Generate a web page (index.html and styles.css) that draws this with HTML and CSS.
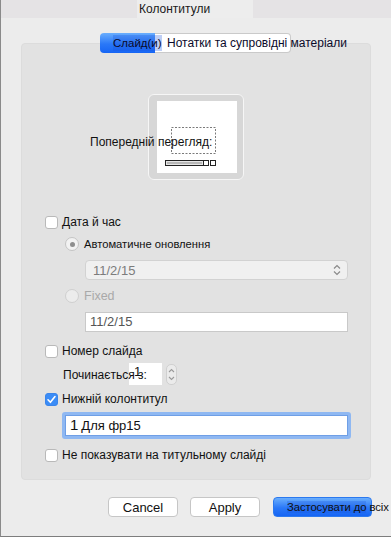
FILE: index.html
```html
<!DOCTYPE html>
<html lang="uk">
<head>
    <meta charset="UTF-8">
    <meta name="viewport" content="width=device-width, initial-scale=1.0">
    <title>Колонтитули</title>
    <link rel="stylesheet" href="styles.css">
</head>
<body>
    <div class="window">
        <header class="titlebar">
            <span class="title">Колонтитули</span>
        </header>

        <main class="content">
            <div class="tabs">
                <span class="tab active"><span class="tab-label">Слайд(и)</span></span>
                <span class="tab">Нотатки та супровідні матеріали</span>
            </div>

            <section class="group">
                <div class="preview">
                    <div class="preview-frame">
                        <svg width="80" height="72" viewBox="0 0 80 72">
                            <rect width="80" height="72" fill="#fff"/>
                            <rect x="14.5" y="26.5" width="44" height="26" fill="none" stroke="#7a7a7a" stroke-dasharray="2 1.5"/>
                            <rect x="8.5" y="59.5" width="38" height="5" fill="#e6e6e6" stroke="#222"/>
                            <line x1="10" y1="62" x2="45" y2="62" stroke="#888"/>
                            <rect x="46.5" y="59.5" width="5" height="5" fill="#fff" stroke="#222"/>
                            <rect x="53.5" y="59.5" width="5" height="5" fill="#fff" stroke="#222"/>
                        </svg>
                    </div>
                    <span class="preview-label">Попередній перегляд:</span>
                </div>

                <label class="check row-date"><span class="box"></span>Дата й час</label>

                <label class="radio row-auto"><span class="dot selected"></span>Автоматичне оновлення</label>

                <div class="select">
                    <span>11/2/15</span>
                    <svg width="8" height="12" viewBox="0 0 8 12">
                        <path d="M1 4.5 L4 1.5 L7 4.5 M1 7.5 L4 10.5 L7 7.5" fill="none" stroke="#8a8a8a" stroke-width="1.2"/>
                    </svg>
                </div>

                <label class="radio row-fixed disabled"><span class="dot"></span>Fixed</label>

                <div class="field">11/2/15</div>

                <label class="check row-number"><span class="box"></span>Номер слайда</label>

                <div class="start-row">
                    <span class="start-label">Починається з:</span>
                    <span class="number">1</span>
                    <span class="stepper">
                        <svg width="11" height="21" viewBox="0 0 11 21">
                            <path d="M3 8 L5.5 5.5 L8 8 M3 13 L5.5 15.5 L8 13" fill="none" stroke="#9a9a9a" stroke-width="1.1"/>
                        </svg>
                    </span>
                </div>

                <label class="check row-footer"><span class="box checked">
                    <svg width="13" height="13" viewBox="0 0 13 13">
                        <path d="M3 6.8 L5.4 9.3 L10 3.6" fill="none" stroke="#fff" stroke-width="1.6" stroke-linecap="round" stroke-linejoin="round"/>
                    </svg>
                </span>Нижній колонтитул</label>

                <div class="footer-field"><span class="big">1</span>Для фр15</div>

                <label class="check row-title"><span class="box"></span>Не показувати на титульному слайді</label>
            </section>

            <footer class="buttons">
                <button>Cancel</button>
                <button>Apply</button>
                <button class="primary"><span class="sel">Застосувати до</span> всіх</button>
            </footer>
        </main>
    </div>
</body>
</html>
```

FILE: styles.css
```css
body {
    margin: 0;
    font-family: "Liberation Sans", Arial, sans-serif;
    font-size: 12px;
    color: #111;
}

.window {
    width: 391px;
    height: 537px;
    box-sizing: border-box;
    background: #ececec;
    border-left: 1px solid #8a8a8a;
    border-bottom: 1px solid #7d7d7d;
    overflow: hidden;
}

.titlebar {
    height: 18px;
    background: #e5e3e5;
    display: flex;
    justify-content: center;
}

.title {
    width: 114px;
    padding-left: 2px;
    margin-left: -2px;
    background: #ededed;
    line-height: 19px;
    font-size: 12px;
    color: #1a1a1a;
}

.content {
    display: flex;
    flex-direction: column;
}

/* pestañas de arriba */

.tabs {
    display: flex;
    margin: 15px 0 -10px 99px;
    height: 20px;
    position: relative;
    z-index: 1;
    white-space: nowrap;
    line-height: 20px;
}

.tab {
    box-sizing: border-box;
    height: 20px;
    width: 136px;
    padding-left: 12px;
    background: #fff;
    border: 1px solid #cacaca;
    border-left: 0;
    border-radius: 0 4px 4px 0;
    line-height: 18px;
    color: #0a0a2a;

    &.active {
        width: 55px;
        padding-left: 13px;
        border: 0;
        border-radius: 4px 0 0 4px;
        background: linear-gradient(#6aaefd, #2a78f8 55%, #1665f4);
        line-height: 20px;
        position: relative;
        z-index: 1;
    }
}

.tab-label {
    display: inline-block;
    font-size: 11.5px;
    background: rgba(20, 80, 220, 0.28);
    line-height: 16px;
}

.group {
    box-sizing: border-box;
    height: 437px;
    margin: 0 20px;
    padding-top: 50px;
    background: #e2e2e2;
    border: 1px solid #dcdcdc;
    border-radius: 4px;
    display: flex;
    flex-direction: column;
}

/* vista previa */

.preview {
    display: grid;
}

.preview-frame,
.preview-label {
    grid-area: 1 / 1;
}

.preview-frame {
    width: 96px;
    height: 86px;
    box-sizing: border-box;
    margin-left: 126px;
    padding: 6px 6px 6px 8px;
    background: #d7d7d7;
    border: 1px solid #f6f6f6;
    border-radius: 6px;

    svg {
        display: block;
    }
}

.preview-label {
    align-self: center;
    margin: 10px 0 0 68px;
    font-size: 12px;
    z-index: 1;
}

/* casillas y radios */

.check,
.radio {
    display: flex;
    align-items: center;
    height: 16px;
    white-space: nowrap;
}

.check {
    margin-left: 23px;
    gap: 4px;
}

.box {
    width: 13px;
    height: 13px;
    box-sizing: border-box;
    background: #fff;
    border: 1px solid #b9b9b9;
    border-radius: 3px;

    &.checked {
        background: #3b8cf6;
        border-color: #3a85ea;

        svg {
            display: block;
            margin: -1px;
        }
    }
}

.radio {
    margin-left: 43px;
    gap: 5px;
    font-size: 11.2px;

    &.disabled {
        color: #a9a9a9;
        font-size: 12.5px;
    }
}

.dot {
    width: 14px;
    height: 14px;
    box-sizing: border-box;
    border-radius: 50%;
    background: #ececec;
    border: 1px solid #cfcfcf;
    display: flex;
    justify-content: center;
    align-items: center;

    &.selected {
        background: #f2f2f2;
        border-color: #c4c4c4;
    }

    &.selected::after {
        content: "";
        width: 5px;
        height: 5px;
        border-radius: 50%;
        background: #8e8e8e;
    }
}

.row-date { margin-top: 34px; }
.row-auto { margin-top: 6px; }
.row-fixed { margin-top: 8px; }
.row-number { margin-top: 11px; }
.row-footer { margin-top: 6px; }
.row-title { margin-top: 8px; }

.select,
.field {
    box-sizing: border-box;
    width: 263px;
    height: 20px;
    margin-left: 63px;
    font-size: 13px;
}

.select {
    margin-top: 8px;
    display: flex;
    align-items: center;
    justify-content: space-between;
    padding: 0 6px 0 7px;
    background: #f0f0f0;
    border: 1px solid #d2d2d2;
    border-radius: 4px;
    color: #7c7c7c;
}

.field {
    margin-top: 8px;
    padding-left: 4px;
    line-height: 18px;
    background: #fff;
    border: 1px solid #c9c9c9;
    color: #555;
}

.start-row {
    display: flex;
    align-items: center;
    height: 22px;
    margin: 4px 0 0 41px;
}

.start-label {
    width: 66px;
    white-space: nowrap;
    position: relative;
    z-index: 1;
    margin-top: 2px;
}

.number {
    box-sizing: border-box;
    width: 33px;
    height: 22px;
    padding-left: 5px;
    background: #fff;
    line-height: 17px;
    font-size: 13px;
}

.stepper {
    margin-left: 4px;
    box-sizing: border-box;
    width: 11px;
    height: 21px;
    border: 1px solid #d0d0d0;
    border-radius: 5px;
    background: #ebebeb;

    svg {
        display: block;
        margin: -1px;
    }
}

.footer-field {
    box-sizing: border-box;
    width: 289px;
    height: 27px;
    margin: 5px 0 0 40px;
    padding-left: 5px;
    background: #fff;
    border: 3px solid #8fb8f2;
    border-radius: 3px;
    box-shadow: inset 0 0 0 1px #6f9fe6;
    display: flex;
    align-items: center;
    font-size: 13px;
    gap: 3px;

    .big {
        font-size: 15px;
        margin-top: -3px;
    }
}

/* botones */

.buttons {
    display: flex;
    justify-content: flex-end;
    gap: 12px;
    margin-top: 17px;
    padding-right: 19px;

    button {
        box-sizing: border-box;
        width: 70px;
        height: 20px;
        padding: 0;
        background: #fff;
        border: 1px solid #c6c6c6;
        border-radius: 4px;
        font-family: inherit;
        font-size: 13px;
        color: #111;
    }

    .primary {
        width: 99px;
        margin-left: 1px;
        padding-left: 13px;
        text-align: left;
        white-space: nowrap;
        overflow: visible;
        font-size: 11.3px;
        letter-spacing: -0.1px;
        background: linear-gradient(#6aaefd, #2a78f8 55%, #1665f4);
        border-color: #2c79ef;
    }
}

.sel {
    background: rgba(20, 80, 220, 0.25);
}
```
